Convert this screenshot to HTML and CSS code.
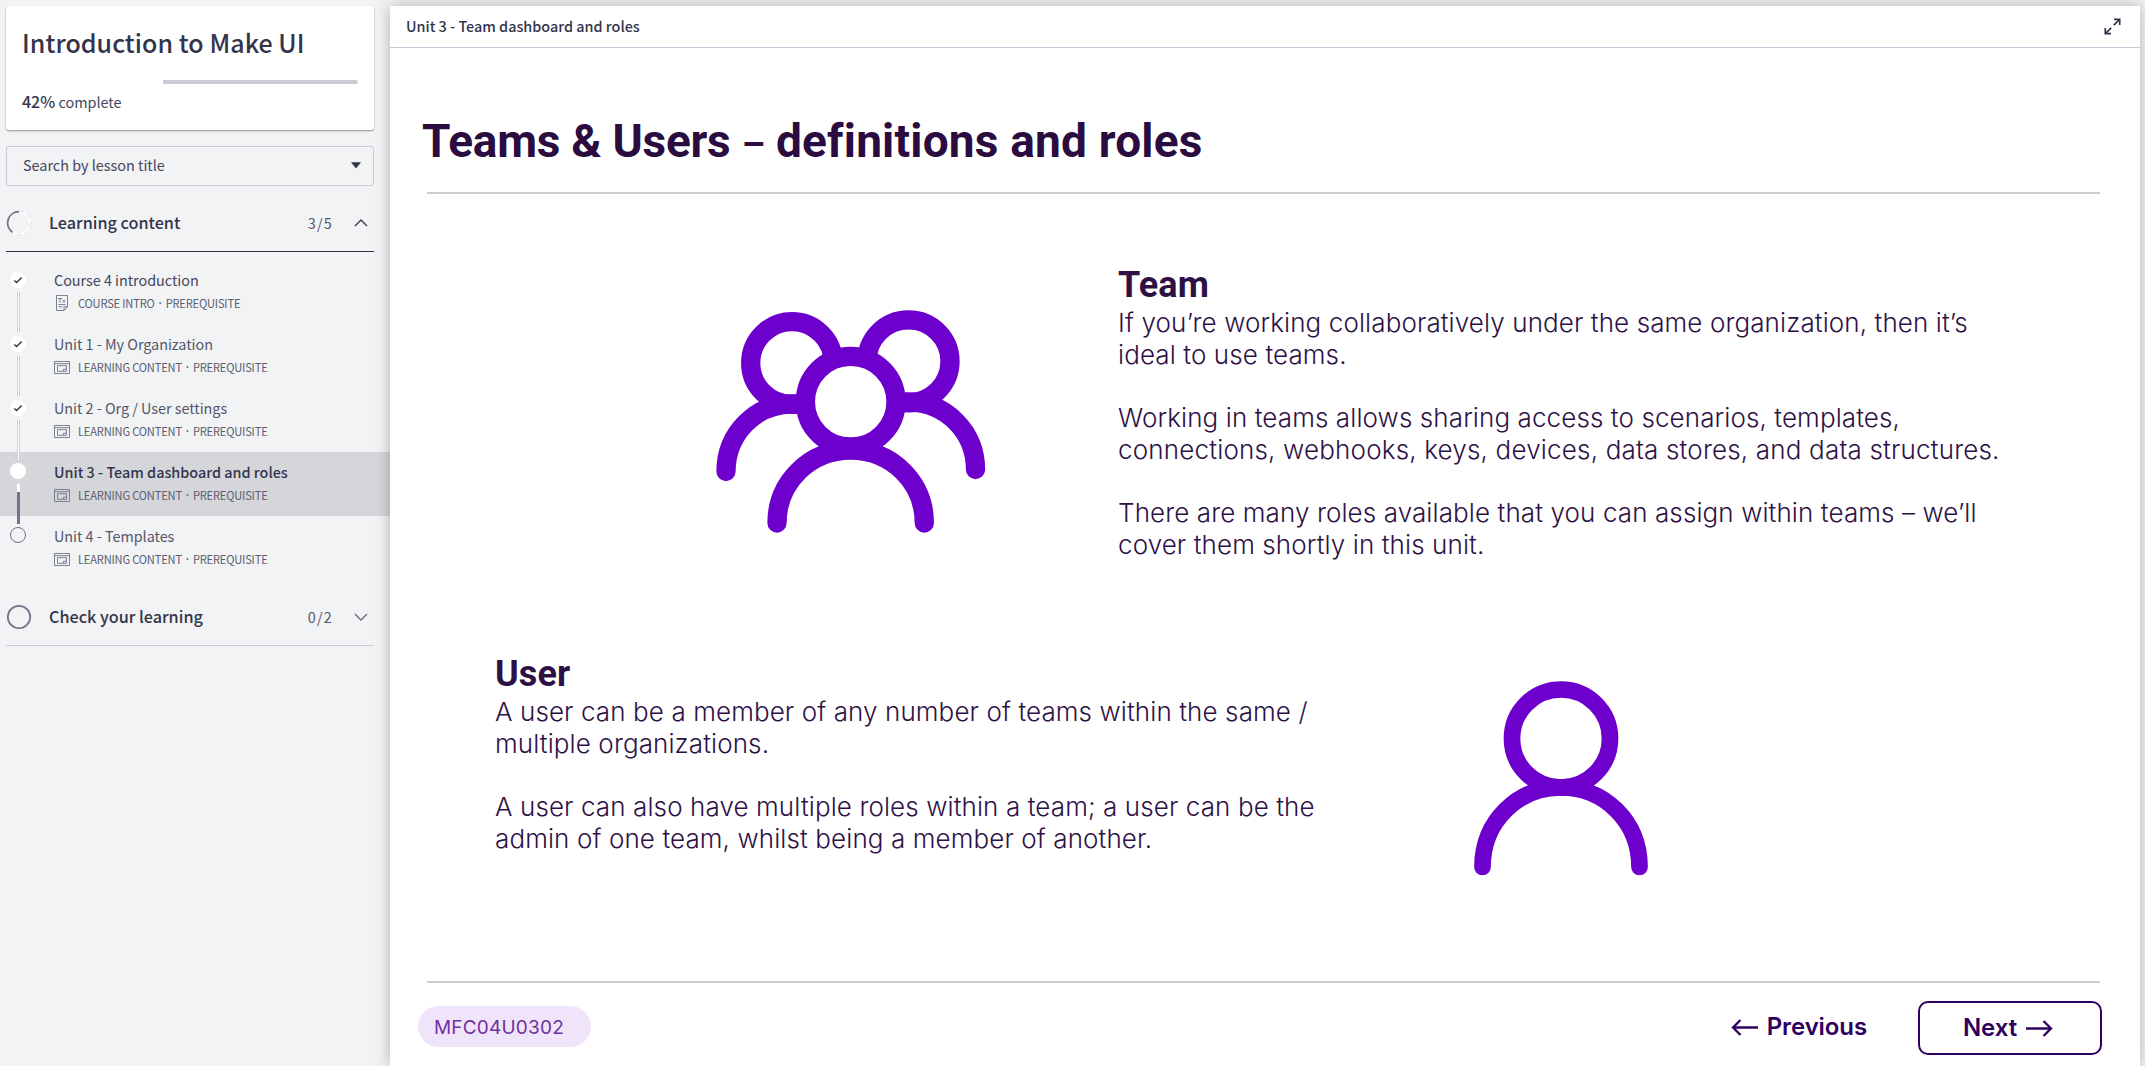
FILE: index.html
```html
<!DOCTYPE html>
<html lang="en">
<head>
<meta charset="utf-8">
<title>Introduction to Make UI</title>
<link rel="stylesheet" href="styles.css">
</head>
<body>
<svg width="0" height="0" class="defs">
  <symbol id="check" viewBox="0 0 16 16"><path d="M4.3 8.4l2.3 2.2 5-5.2" fill="none" stroke="#333" stroke-width="1.4"/></symbol>
  <symbol id="window" viewBox="0 0 16 13"><path d="M.5.5h15v12H.5zM.5 2.7h15M3.5 4.7h9v5.6h-9zM9.5 10.300v-2.200h3" fill="none" stroke="#7d7f92"/></symbol>
  <symbol id="doc" viewBox="0 0 16 16"><path d="M2.500.5h11v11.200l-3.500 3.800h-7.500zM10 15.500v-3.800h3.500M4.500 9.500h7M4.500 11.700h4M4 3.500h4M6 3.500v4M8.500 5l2.600 2.500M11.100 5L8.500 7.500" fill="none" stroke="#7d7f92"/></symbol>
</svg>
<div class="app">
  <aside class="sidebar">
    <section class="course-card">
      <h1 class="course-title">Introduction to Make UI</h1>
      <div class="progress"><div class="progress-rest" style="width:58%"></div></div>
      <p class="complete"><b>42%</b> complete</p>
    </section>
    <div class="search"><span>Search by lesson title</span><svg width="10" height="7" viewBox="0 0 10 7"><path d="M0 .3h10L5 6.500z" fill="#33344a"/></svg></div>
    <div class="section open">
      <svg class="ring" width="26" height="26" viewBox="0 0 26 26"><circle cx="13" cy="13" r="11.300" fill="none" stroke="#fff" stroke-width="1.800"/><circle cx="13" cy="13" r="11.900" fill="none" stroke="#c8c9cf" stroke-width=".6" stroke-dasharray="5 3"/><path d="M13 1.700A11.300 11.300 0 0 0 6.400 22.200" fill="none" stroke="#6f7086" stroke-width="1.800"/></svg>
      <h2 class="section-title">Learning content</h2><span class="count">3/5</span>
      <svg class="chev" width="14" height="8" viewBox="0 0 14 8"><path d="M1 7l6-6 6 6" fill="none" stroke="#45465a" stroke-width="1.500"/></svg>
    </div>
    <ul class="lessons">
      <li class="lesson"><div class="rail"><svg class="dot done"><use href="#check"/></svg><i class="line"></i></div>
        <div class="info"><h3 class="name first">Course 4 introduction</h3><p class="meta"><svg width="16" height="16"><use href="#doc"/></svg><span>COURSE INTRO</span><i>·</i><span>PREREQUISITE</span></p></div></li>
      <li class="lesson"><div class="rail"><svg class="dot done"><use href="#check"/></svg><i class="line"></i></div>
        <div class="info"><h3 class="name">Unit 1 - My Organization</h3><p class="meta"><svg width="16" height="13"><use href="#window"/></svg><span>LEARNING CONTENT</span><i>·</i><span>PREREQUISITE</span></p></div></li>
      <li class="lesson"><div class="rail"><svg class="dot done"><use href="#check"/></svg><i class="line"></i></div>
        <div class="info"><h3 class="name">Unit 2 - Org / User settings</h3><p class="meta"><svg width="16" height="13"><use href="#window"/></svg><span>LEARNING CONTENT</span><i>·</i><span>PREREQUISITE</span></p></div></li>
      <li class="lesson active"><div class="rail"><svg class="dot done"></svg><i class="line next"></i></div>
        <div class="info"><h3 class="name">Unit 3 - Team dashboard and roles</h3><p class="meta"><svg width="16" height="13"><use href="#window"/></svg><span>LEARNING CONTENT</span><i>·</i><span>PREREQUISITE</span></p></div></li>
      <li class="lesson"><div class="rail"><span class="dot todo"></span></div>
        <div class="info"><h3 class="name">Unit 4 - Templates</h3><p class="meta"><svg width="16" height="13"><use href="#window"/></svg><span>LEARNING CONTENT</span><i>·</i><span>PREREQUISITE</span></p></div></li>
    </ul>
    <div class="section">
      <svg class="ring" width="26" height="26" viewBox="0 0 26 26"><circle cx="13" cy="13" r="11.200" fill="none" stroke="#737488" stroke-width="1.800"/></svg>
      <h2 class="section-title">Check your learning</h2><span class="count">0/2</span>
      <svg class="chev" width="14" height="8" viewBox="0 0 14 8"><path d="M1 1l6 6 6-6" fill="none" stroke="#6f7086" stroke-width="1.500"/></svg>
    </div>
  </aside>
  <main class="viewer">
    <header class="bar"><span>Unit 3 - Team dashboard and roles</span>
      <svg width="17" height="17" viewBox="0 0 17 17" fill="none" stroke="#33344a" stroke-width="1.700"><path d="M9.800 7.200L15.500 1.500M10 1.300h5.700V7M7.200 9.800L1.500 15.500M1.300 10v5.700H7"/></svg></header>
    <article class="slide">
      <h1 class="slide-title">Teams &amp; Users <span class="dash">–</span> <span class="wide">definitions and roles</span></h1>
      <div class="block team">
        <svg width="320" height="270" viewBox="0 0 320 270" fill="none" stroke="#6d00cc" stroke-width="19.300" stroke-linecap="round">
          <circle cx="102" cy="83" r="41.300"/><circle cx="218.500" cy="81.300" r="41.500"/>
          <path d="M106 124H102C65 124 36 154 36 191.500M214 122H218.500C256 122 285.500 152 285.500 189.500"/>
          <circle cx="160.700" cy="121.700" r="45.300" fill="#fff"/>
          <path d="M87 243C87 202 120 170 160.700 170S234.300 202 234.300 243"/>
        </svg>
        <div class="copy"><h2>Team</h2>
          <p>If you’re working collaboratively under the same organization, then it’s<br>ideal to use teams.</p>
          <p>Working in teams allows sharing access to scenarios, templates,<br><span class="long">connections, webhooks, keys, devices, data stores, and data structures.</span></p>
          <p>There are many roles available that you can assign within teams – we’ll<br>cover them shortly in this unit.</p></div>
      </div>
      <div class="block user">
        <div class="copy"><h2>User</h2>
          <p>A user can be a member of any number of teams within the same /<br>multiple organizations.</p>
          <p>A user can also have multiple roles within a team; a user can be the<br>admin of one team, whilst being a member of another.</p></div>
        <svg width="176" height="200" viewBox="0 0 176 200" fill="none" stroke="#6d00cc" stroke-width="16.700" stroke-linecap="round"><circle cx="88" cy="59.500" r="49"/><path d="M9.500 188C9.500 142 45 108.500 88 108.500S166.500 142 166.500 188"/></svg>
      </div>
      <footer class="foot">
        <span class="code">MFC04U0302</span>
        <span class="prev"><svg width="27" height="17" viewBox="0 0 27 17"><path d="M27 8.500H2M9.500 1L2 8.500 9.500 16"/></svg>Previous</span>
        <span class="next-btn">Next<svg width="27" height="17" viewBox="0 0 27 17"><path d="M0 8.500H25M17.500 1L25 8.500 17.500 16"/></svg></span>
      </footer>
    </article>
  </main>
</div>
</body>
</html>
```
FILE: styles.css
```css
* { box-sizing: border-box; margin: 0; padding: 0; }
body { background: #f1f3f5; font-family: "Noto Sans CJK SC", sans-serif; color: #33344a; height: 1066px; overflow: hidden; }
.defs { display: none; }
.app { display: flex; height: 1066px; padding: 6px 5px 0 0; }

/* Sidebar */
.sidebar { width: 390px; flex: none; }
.course-card { margin: 0 16px 0 6px; height: 124px; background: #fff; border-radius: 3px; padding: 19px 16px 0 16px; box-shadow: 0 1px 2px rgba(0,0,0,.4); }
.course-title { font-size: 25px; font-weight: 500; line-height: 34px; height: 55px; letter-spacing: .05px; white-space: nowrap; }
.progress { display: flex; justify-content: flex-end; height: 4px; }
.progress-rest { background: #c8cad5; border-radius: 0 2px 2px 0; }
.complete { font-size: 14.4px; line-height: 20px; margin-top: 7px; color: #45465a; }
.complete b { font-size: 16px; font-weight: 500; color: #33344a; }
.search { margin: 16px 16px 0 6px; height: 40px; border: 1px solid #c8cad5; border-radius: 3px; display: flex; align-items: center; justify-content: space-between; padding: 0 12px 1px 16px; font-size: 14.4px; }
.search span { padding-bottom: 2px; color: #45465a; }
.section { margin: 0 16px 0 6px; height: 66px; display: flex; align-items: center; border-bottom: 1px solid #c8cad5; padding-top: 8px; }
.section.open { border-bottom-color: #33344a; }
.ring { flex: none; }
.section-title { font-size: 16.200px; line-height: 24px; font-weight: 500; margin-left: 17px; padding-bottom: 1px; flex: 1; }
.count { font-size: 14.4px; letter-spacing: 1.200px; color: #555669; margin-right: 21px; }
.chev { margin-right: 6px; }
.lessons { list-style: none; padding-top: 8px; height: 328px; }
.lesson { display: flex; height: 64px; padding-left: 10px; }
.lesson.active { background: #d5d6da; }
.rail { width: 16px; height: 64px; display: flex; flex-direction: column; align-items: center; padding-top: 12px; position: relative; z-index: 1; flex: none; }
.dot { width: 16px; height: 16px; border-radius: 50%; flex: none; }
.done { background: #fff; }
.todo { border: 1px solid #6f7086; margin-top: -1px; }
.active .dot { margin-top: -1px; }
.line { width: 3px; height: 40px; flex: none; margin: 4px 0 0 1px; border: solid #d0d1d6; border-width: 0 1px; background: #fff; }
.line.next { border: 0; margin-top: 5px; background: linear-gradient(#fff 8px, #73748a 8px); }
.info { padding: 9px 0 0 28px; }
.name { font-size: 14.4px; font-weight: 400; line-height: 22px; color: #55566a; letter-spacing: -.03px; }
.name.first { color: #45465a; }
.active .name { font-weight: 500; color: #33344a; letter-spacing: 0; }
.meta { display: flex; align-items: center; height: 20px; margin-top: 2px; font-size: 11.100px; color: #5b5c70; letter-spacing: -.17px; }
.meta svg { margin-right: 8px; }
.meta i { width: 11px; text-align: center; font: 500 12px "Noto Sans", sans-serif; letter-spacing: 0; }

/* Lesson viewer */
.viewer { flex: 1; background: #fff; box-shadow: 0 0 14px rgba(0,0,0,.28); display: flex; flex-direction: column; }
.bar { height: 42px; flex: none; border-bottom: 1px solid #c8c6d6; display: flex; align-items: center; justify-content: space-between; padding: 0 19px 0 16px; font-size: 14.4px; font-weight: 500; }
.bar span { padding-bottom: 2px; }
.slide { flex: 1; padding: 0 40px 0 37px; color: #2d1145; display: flex; flex-direction: column; }
.slide > * { flex: none; }
.slide-title { font: 700 46px/60px Roboto, sans-serif; letter-spacing: -.25px; color: #2a0c40; margin: 0 0 0 -5px; height: 144px; padding-top: 63px; white-space: nowrap; }
.dash { font-size: 37px; }
.wide { letter-spacing: .2px; }
.block { display: flex; font: 300 26px/31.700px Inter, sans-serif; letter-spacing: .1px; white-space: nowrap; border-top: 2px solid #d0cccb; }
.block h2 { font: 700 36px/44px Roboto, sans-serif; letter-spacing: .1px; }
.block p + p { margin-top: 31.700px; }
.long { letter-spacing: .18px; }
.team { height: 454px; padding: 86px 0 0 263px; }
.team .copy { margin: -17px 0 0 108px; }
.user { border: 0; height: 335px; padding: 6px 0 0 68px; }
.user .copy { width: 966px; }
.user svg { margin-left: 12px; margin-top: 27px; }
.foot { height: 85px; border-top: 2px solid #d0cccb; display: flex; align-items: flex-start; font: 600 24px/30px Inter, sans-serif; color: #30005f; letter-spacing: -.1px; }
.foot path { fill: none; stroke: #30005f; stroke-width: 2.300; }
.code { width: 173px; height: 41px; border-radius: 21px; background: #f0e4fa; color: #7030a0; font: 400 19px/43px Inter, sans-serif; letter-spacing: .2px; padding-left: 16px; margin: 23px auto 0 -9px; }
.prev { display: flex; align-items: center; gap: 9px; margin: 29px 51px 0 0; }
.next-btn { display: flex; align-items: center; gap: 9px; width: 184px; height: 54px; margin: 18px -2px 0 0; padding-left: 43px; border: 2px solid #30005f; border-radius: 10px; }
```
